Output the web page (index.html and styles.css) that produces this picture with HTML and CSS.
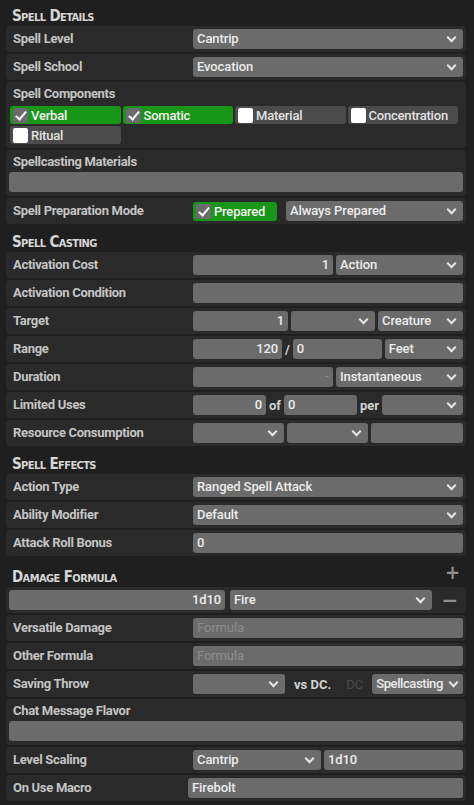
FILE: index.html
```html
<!DOCTYPE html>
<html>
<head>
<meta charset="utf-8">
<link rel="stylesheet" href="styles.css">
</head>
<body>
<div class="sheet">
  <h3 class="section">Spell Details</h3>
  <div class="row"><span class="lbl">Spell Level</span><div class="fields"><div class="sel">Cantrip</div></div></div>
  <div class="row"><span class="lbl">Spell School</span><div class="fields"><div class="sel">Evocation</div></div></div>
  <div class="row stack comp">
    <span class="lbl">Spell Components</span>
    <div class="checks">
      <div class="chk on"><span class="box"></span>Verbal</div>
      <div class="chk on"><span class="box"></span>Somatic</div>
      <div class="chk"><span class="box"></span>Material</div>
      <div class="chk"><span class="box"></span>Concentration</div>
      <div class="chk"><span class="box"></span>Ritual</div>
    </div>
  </div>
  <div class="row stack">
    <span class="lbl">Spellcasting Materials</span>
    <div class="inp full"></div>
  </div>
  <div class="row"><span class="lbl">Spell Preparation Mode</span><div class="fields wide-gap"><div class="chk on prep"><span class="box"></span>Prepared</div><div class="sel">Always Prepared</div></div></div>

  <h3 class="section">Spell Casting</h3>
  <div class="row"><span class="lbl">Activation Cost</span><div class="fields"><div class="inp num w140">1</div><div class="sel">Action</div></div></div>
  <div class="row"><span class="lbl">Activation Condition</span><div class="fields"><div class="inp"></div></div></div>
  <div class="row"><span class="lbl">Target</span><div class="fields"><div class="inp num w95">1</div><div class="sel w84"></div><div class="sel">Creature</div></div></div>
  <div class="row"><span class="lbl">Range</span><div class="fields"><div class="inp num w89">120</div><span class="sep">/</span><div class="inp w89">0</div><div class="sel">Feet</div></div></div>
  <div class="row"><span class="lbl">Duration</span><div class="fields"><div class="inp num w140 faint">-</div><div class="sel">Instantaneous</div></div></div>
  <div class="row"><span class="lbl">Limited Uses</span><div class="fields"><div class="inp num w73">0</div><span class="sep">of</span><div class="inp w73">0</div><span class="sep">per</span><div class="sel"></div></div></div>
  <div class="row"><span class="lbl">Resource Consumption</span><div class="fields"><div class="sel w91"></div><div class="sel w81"></div><div class="inp"></div></div></div>

  <h3 class="section">Spell Effects</h3>
  <div class="row"><span class="lbl">Action Type</span><div class="fields"><div class="sel">Ranged Spell Attack</div></div></div>
  <div class="row"><span class="lbl">Ability Modifier</span><div class="fields"><div class="sel">Default</div></div></div>
  <div class="row"><span class="lbl">Attack Roll Bonus</span><div class="fields"><div class="inp">0</div></div></div>

  <h3 class="section dmg">Damage Formula<span class="plus">+</span></h3>
  <div class="row dmgrow"><div class="inp num w216">1d10</div><div class="sel grow">Fire</div><span class="minus">&minus;</span></div>
  <div class="row"><span class="lbl">Versatile Damage</span><div class="fields"><div class="inp ph">Formula</div></div></div>
  <div class="row"><span class="lbl">Other Formula</span><div class="fields"><div class="inp ph">Formula</div></div></div>
  <div class="row"><span class="lbl">Saving Throw</span><div class="fields"><div class="sel w92"></div><span class="sep vs">vs DC.</span><span class="dc">DC</span><div class="sel tight">Spellcasting</div></div></div>
  <div class="row stack">
    <span class="lbl">Chat Message Flavor</span>
    <div class="inp full"></div>
  </div>
  <div class="row"><span class="lbl">Level Scaling</span><div class="fields"><div class="sel w128">Cantrip</div><div class="inp">1d10</div></div></div>
  <div class="row"><span class="lbl">On Use Macro</span><div class="fields shift"><div class="inp">Firebolt</div></div></div>
</div>
</body>
</html>
```
FILE: styles.css
```css
* { box-sizing: border-box; }
html, body { margin: 0; padding: 0; }
body {
  background: #1f1f1f;
  font-family: "Roboto", "Liberation Sans", sans-serif;
  color: #dcdcdc;
  width: 474px;
  height: 805px;
  overflow: hidden;
}
.sheet { padding: 0 8px 0 6px; }

.section {
  margin: 0;
  height: 26px;
  padding: 5px 0 0 6px;
  font-family: "Liberation Sans Narrow", "DejaVu Sans Condensed", "Liberation Sans", sans-serif;
  font-stretch: condensed;
  font-variant: small-caps;
  font-weight: 700;
  font-size: 15px;
  line-height: 16px;
  color: #d6d6d6;
  letter-spacing: -0.6px;
  display: flex;
  align-items: center;
}
.section.dmg { height: 29px; padding-top: 8px; position: relative; }
.plus {
  position: absolute;
  right: 6px;
  top: 6px;
  font-family: "DejaVu Sans", sans-serif;
  font-variant: normal;
  font-size: 20px;
  font-weight: 700;
  color: #8f8f8f;
  letter-spacing: 0;
}

.row {
  display: flex;
  align-items: center;
  height: 26px;
  padding: 3px;
  margin-bottom: 2px;
  background: #2a2a2a;
  border-radius: 4px;
}
.row.stack {
  flex-direction: column;
  align-items: stretch;
  height: 46px;
  padding: 2px 3px 3px 3px;
}
.row.stack .lbl { flex: none; height: 20px; line-height: 20px; }
.row.comp { height: 66px; padding: 2px 8px 4px 4px; }
.row.comp .lbl { padding-left: 3px; height: 22px; }

.lbl {
  flex: 0 0 184px;
  padding-left: 4px;
  padding-bottom: 2px;
  font-size: 13px;
  font-weight: 700;
  color: #c4c4c4;
  letter-spacing: -0.3px;
  white-space: nowrap;
}

.fields {
  flex: 1;
  display: flex;
  align-items: center;
  gap: 3px;
  min-width: 0;
}
.fields.wide-gap { gap: 9px; }
.fields.shift { margin-left: -5px; }

.inp, .sel {
  flex: 1 1 0;
  min-width: 0;
  height: 20px;
  line-height: 20px;
  background: #6b6b6b;
  border-radius: 3px;
  padding: 0 4px;
  font-size: 13px;
  font-weight: 500;
  color: #ececec;
  white-space: nowrap;
  overflow: hidden;
  letter-spacing: -0.1px;
}
.inp.full { flex: none; height: 20px; }
.inp.num { text-align: right; }
.inp.ph { color: #8d8d8d; font-weight: 400; }
.inp.faint { color: #8a8a8a; }
.sel { position: relative; padding-right: 18px; }
.sel.tight { padding-right: 14px; letter-spacing: -0.4px; }
.sel::after {
  content: "";
  position: absolute;
  right: 8px;
  top: 5px;
  width: 5px;
  height: 5px;
  border-right: 2px solid #e6e6e6;
  border-bottom: 2px solid #e6e6e6;
  transform: rotate(45deg);
}
.sel.tight::after { right: 6px; }

.w140 { flex: 0 0 140px; }
.w95 { flex: 0 0 95px; }
.w84 { flex: 0 0 84px; }
.w89 { flex: 0 0 89px; }
.w73 { flex: 0 0 73px; }
.w91 { flex: 0 0 91px; }
.w81 { flex: 0 0 81px; }
.w92 { flex: 0 0 92px; }
.w128 { flex: 0 0 128px; }
.w216 { flex: 0 0 216px; }
.grow { flex: 1; }

.sep {
  flex: none;
  font-size: 13px;
  font-weight: 700;
  color: #d2d2d2;
}
.sep.vs { margin-left: 6px; }
.dc {
  flex: none;
  font-size: 13px;
  color: #4a4a4a;
  margin-left: 12px;
  margin-right: 6px;
}

.dmgrow { gap: 5px; padding-right: 3px; }
.minus {
  flex: 0 0 26px;
  text-align: center;
  font-family: "DejaVu Sans", sans-serif;
  font-size: 20px;
  font-weight: 700;
  color: #8f8f8f;
  line-height: 20px;
}

.checks {
  display: grid;
  grid-template-columns: repeat(4, 1fr);
  gap: 2px;
}
.chk {
  display: flex;
  align-items: center;
  height: 18px;
  background: #4b4b4b;
  border-radius: 3px;
  padding-left: 3px;
  font-size: 13px;
  font-weight: 500;
  color: #e2e2e2;
  letter-spacing: -0.2px;
}
.chk.on { background: #189618; color: #f2f2f2; }
.box {
  width: 15px;
  height: 15px;
  background: #ffffff;
  border-radius: 2px;
  margin-right: 3px;
  position: relative;
  flex: none;
}
.chk.on .box { background: #6b6b6b; }
.chk.on .box::after {
  content: "";
  position: absolute;
  left: 5px;
  top: 1px;
  width: 4px;
  height: 9px;
  border-right: 2.5px solid #fff;
  border-bottom: 2.5px solid #fff;
  transform: rotate(40deg);
}
.chk.prep { flex: 0 0 84px; height: 19px; }
```
